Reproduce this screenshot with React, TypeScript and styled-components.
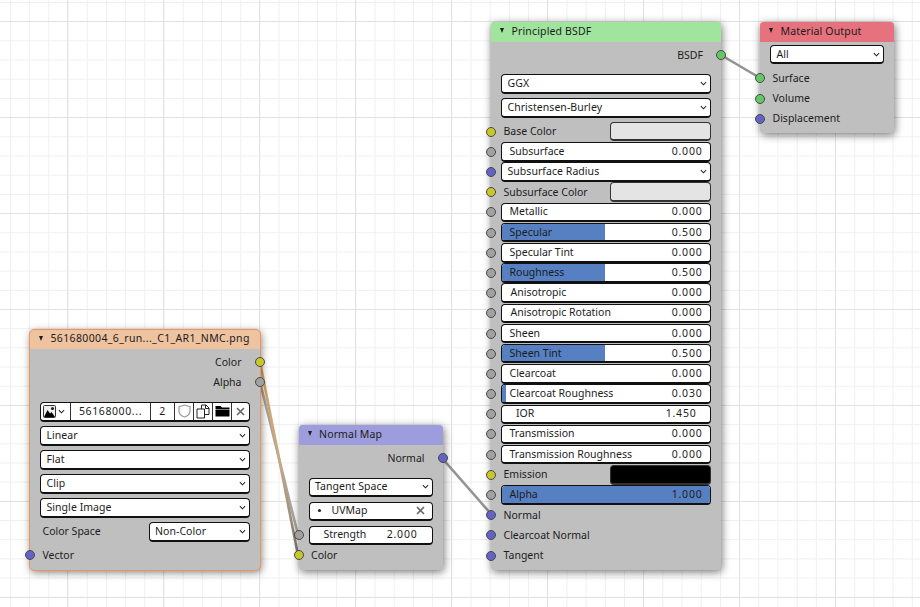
import React from "react";
import styled, { createGlobalStyle } from "styled-components";

const GlobalStyle = createGlobalStyle`
  html, body {
    margin: 0;
    padding: 0;
    background: #ffffff;
    overflow: hidden;
  }
`;

const SOCKET = {
  yellow: "#c7c729",
  gray: "#a1a1a1",
  blue: "#6363c7",
  green: "#63c763",
};

type SocketColor = keyof typeof SOCKET;

const Canvas = styled.div`
  position: relative;
  width: 920px;
  height: 607px;
  overflow: hidden;
  font-family: "Noto Sans", sans-serif;
  font-size: 10.5px;
  color: #1c1c1c;
  background-color: #ffffff;
  background-image: linear-gradient(to right, #e2e2e2 1px, transparent 1px),
    linear-gradient(to bottom, #e2e2e2 1px, transparent 1px),
    linear-gradient(to right, #efefef 1px, transparent 1px),
    linear-gradient(to bottom, #efefef 1px, transparent 1px);
  background-size: 96px 96px, 96px 96px, 19.2px 19.2px, 19.2px 19.2px;
  background-position: 67px 0, 0 21px, 10px 0, 0 2px;
`;

const Links = styled.svg`
  position: absolute;
  left: 0;
  top: 0;
`;

const Node = styled.div<{ $x: number; $y: number; $w: number; $h: number; $selected?: boolean }>`
  position: absolute;
  left: ${(p) => p.$x}px;
  top: ${(p) => p.$y}px;
  width: ${(p) => p.$w}px;
  height: ${(p) => p.$h}px;
  box-sizing: border-box;
  border-radius: 4px;
  background: #bfbfbf;
  box-shadow: 1px 2px 9px rgba(0, 0, 0, 0.55);
  outline: ${(p) => (p.$selected ? "1.5px solid #e8965f" : "none")};
`;

const Header = styled.div<{ $color: string; $track?: number }>`
  display: flex;
  align-items: center;
  gap: 7.5px;
  height: 19.5px;
  padding: 0 0 2px 9px;
  box-sizing: border-box;
  border-radius: 4px 4px 0 0;
  background: ${(p) => p.$color};
  white-space: nowrap;
  letter-spacing: ${(p) => p.$track ?? 0.15}px;
`;

const Caret = styled.span`
  width: 0;
  height: 0;
  flex: none;
  border-left: 2.8px solid transparent;
  border-right: 2.8px solid transparent;
  border-top: 5.5px solid #1e1e1e;
`;

const Row = styled.div<{ $h?: number; $gap?: number; $right?: boolean }>`
  position: relative;
  display: flex;
  align-items: center;
  justify-content: ${(p) => (p.$right ? "flex-end" : "flex-start")};
  height: ${(p) => p.$h ?? 20.19}px;
  margin-top: ${(p) => p.$gap ?? 0}px;
  padding: 0 10px;
  white-space: nowrap;
`;

const Socket = styled.span<{ $color: SocketColor; $right?: boolean }>`
  position: absolute;
  top: 50%;
  ${(p) => (p.$right ? "right: -5px;" : "left: -5px;")}
  width: 10px;
  height: 10px;
  margin-top: -5px;
  box-sizing: border-box;
  border-radius: 50%;
  border: 1px solid #4a4a4a;
  background: ${(p) => SOCKET[p.$color]};
`;

const Label = styled.span<{ $right?: boolean }>`
  padding: ${(p) => (p.$right ? "0 8px 1px 0" : "0 0 1px 2.5px")};
`;

const Field = styled.div`
  position: relative;
  display: flex;
  align-items: center;
  flex: 1;
  min-width: 0;
  height: 19.5px;
  box-sizing: border-box;
  border: 1px solid #111111;
  border-bottom-width: 2px;
  border-radius: 4px;
  background: #ffffff;
  overflow: hidden;
`;

const SelectText = styled.span`
  flex: 1;
  padding: 0 0 1px 5.5px;
  letter-spacing: 0.05px;
`;

const ChevronIcon = styled.svg`
  width: 7px;
  height: 5px;
  margin-right: 3px;
  flex: none;
`;

const Chevron = () => (
  <ChevronIcon viewBox="0 0 8 5">
    <path d="M1 1 L4 4 L7 1" fill="none" stroke="#222" strokeWidth="1.2" />
  </ChevronIcon>
);

const Fill = styled.span<{ $pct: number }>`
  position: absolute;
  left: 0;
  top: 0;
  bottom: 0;
  width: ${(p) => p.$pct}%;
  background: #5680c2;
`;

const FieldLabel = styled.span<{ $indent?: number }>`
  position: relative;
  flex: 1;
  padding: 0 0 1px ${(p) => p.$indent ?? 7.5}px;
`;

const FieldValue = styled.span<{ $pad?: number }>`
  position: relative;
  padding: 0 ${(p) => p.$pad ?? 7.5}px 1px 0;
  letter-spacing: 0.8px;
`;

const Swatch = styled.div<{ $color: string }>`
  width: 101px;
  height: 19.5px;
  margin-left: auto;
  box-sizing: border-box;
  border: 1px solid #333333;
  border-bottom-width: 2px;
  border-radius: 4px;
  background: ${(p) => p.$color};
`;

const SideSelect = styled(Field)`
  flex: none;
  width: 101px;
  margin-left: auto;
`;

const ImageBar = styled(Field)`
  display: grid;
  grid-template-columns: 30px 80px 24px 19px 19px 19px 1fr;
  align-items: stretch;
`;

const Cell = styled.div`
  display: flex;
  align-items: center;
  justify-content: center;
  gap: 2px;
  box-sizing: border-box;
  border-right: 1px solid #333333;
  letter-spacing: 0.6px;

  &:last-child {
    border-right: none;
  }
`;

const Dot = styled.span`
  width: 3px;
  height: 3px;
  margin: 0 11px 0 8px;
  border-radius: 50%;
  background: #222222;
`;

const ClearX = styled.svg`
  width: 9px;
  height: 9px;
  margin-right: 7px;
  flex: none;
`;

const Clear = () => (
  <ClearX viewBox="0 0 9 9">
    <path d="M1 1 L8 8 M8 1 L1 8" stroke="#666" strokeWidth="1.6" fill="none" />
  </ClearX>
);

const ImageIcon = () => (
  <svg width="13" height="13" viewBox="0 0 13 13">
    <rect x="0.5" y="0.5" width="12" height="12" rx="1" fill="#eee" stroke="#333" />
    <path d="M1 12 L4.5 5 L7 8.5 L8.5 7 L12 12 Z" fill="#000" />
    <circle cx="9.5" cy="3.5" r="1.5" fill="#222" />
  </svg>
);

const ShieldIcon = () => (
  <svg width="13" height="14" viewBox="0 0 13 14">
    <path
      d="M6.5 1 L12 2.6 V7 C12 10 9.5 12 6.5 13 C3.5 12 1 10 1 7 V2.6 Z"
      fill="none"
      stroke="#9a9a9a"
      strokeWidth="1.2"
    />
  </svg>
);

const CopyIcon = () => (
  <svg width="14" height="15" viewBox="0 0 14 15">
    <path d="M5.5 1 H10 L13 4 V10.5 H5.5 Z" fill="#fff" stroke="#222" />
    <path d="M9.5 1 V4.5 H13" fill="none" stroke="#222" />
    <path d="M1 5 H8.5 V14 H1 Z" fill="#fff" stroke="#222" />
  </svg>
);

const FolderIcon = () => (
  <svg width="15" height="12" viewBox="0 0 15 12">
    <path d="M0.5 1 H5.5 L7 2.5 H14.5 V4 H0.5 Z M0.5 4.5 H14.5 V11.5 H0.5 Z" fill="#000" />
  </svg>
);

type Slot = { label: string; value: string; pct?: number; indent?: number; pad?: number; socket?: SocketColor };

const Slider = ({ label, value, pct = 0, indent, pad }: Slot) => (
  <Field>
    <Fill $pct={pct} />
    <FieldLabel $indent={indent}>{label}</FieldLabel>
    <FieldValue $pad={pad}>{value}</FieldValue>
  </Field>
);

const Select = ({ children }: { children: React.ReactNode }) => (
  <Field>
    <SelectText>{children}</SelectText>
    <Chevron />
  </Field>
);

const SliderRow = (slot: Slot) => (
  <Row>
    <Socket $color={slot.socket ?? "gray"} />
    <Slider {...slot} />
  </Row>
);

const ColorRow = ({ label, color, socket }: { label: string; color: string; socket: SocketColor }) => (
  <Row>
    <Socket $color={socket} />
    <Label>{label}</Label>
    <Swatch $color={color} />
  </Row>
);

const InputRow = ({ label, socket, h, gap }: { label: string; socket: SocketColor; h?: number; gap?: number }) => (
  <Row $h={h} $gap={gap}>
    <Socket $color={socket} />
    <Label>{label}</Label>
  </Row>
);

const OutputRow = ({ label, socket, gap }: { label: string; socket: SocketColor; gap?: number }) => (
  <Row $right $gap={gap}>
    <Label $right>{label}</Label>
    <Socket $color={socket} $right />
  </Row>
);

const SelectRow = ({ children, gap }: { children: React.ReactNode; gap?: number }) => (
  <Row $h={24} $gap={gap}>
    <Select>{children}</Select>
  </Row>
);

const ImageNode = () => (
  <Node $x={30} $y={329.5} $w={229.5} $h={240} $selected>
    <Header $color="#efc2a0" $track={0.36}>
      <Caret />
      561680004_6_run..._C1_AR1_NMC.png
    </Header>
    <OutputRow label="Color" socket="yellow" gap={3} />
    <OutputRow label="Alpha" socket="gray" />
    <Row $h={24} $gap={7.5}>
      <ImageBar>
        <Cell>
          <ImageIcon />
          <Chevron />
        </Cell>
        <Cell>56168000...</Cell>
        <Cell>2</Cell>
        <Cell>
          <ShieldIcon />
        </Cell>
        <Cell>
          <CopyIcon />
        </Cell>
        <Cell>
          <FolderIcon />
        </Cell>
        <Cell>
          <svg width="9" height="9" viewBox="0 0 9 9">
            <path d="M1 1 L8 8 M8 1 L1 8" stroke="#666" strokeWidth="1.6" fill="none" />
          </svg>
        </Cell>
      </ImageBar>
    </Row>
    <SelectRow>Linear</SelectRow>
    <SelectRow>Flat</SelectRow>
    <SelectRow>Clip</SelectRow>
    <SelectRow>Single Image</SelectRow>
    <Row $h={24}>
      <Label>Color Space</Label>
      <SideSelect>
        <SelectText>Non-Color</SelectText>
        <Chevron />
      </SideSelect>
    </Row>
    <InputRow label="Vector" socket="blue" gap={1.5} />
  </Node>
);

const NormalMapNode = () => (
  <Node $x={298.5} $y={425} $w={144} $h={145}>
    <Header $color="#9d9cdc">
      <Caret />
      Normal Map
    </Header>
    <OutputRow label="Normal" socket="blue" gap={3.5} />
    <SelectRow gap={7.3}>Tangent Space</SelectRow>
    <Row $h={24}>
      <Field>
        <Dot />
        <FieldLabel $indent={0}>UVMap</FieldLabel>
        <Clear />
      </Field>
    </Row>
    <Row $h={24}>
      <Socket $color="gray" />
      <Slider label="Strength" value="2.000" indent={14} pad={14} />
    </Row>
    <InputRow label="Color" socket="yellow" h={16} />
  </Node>
);

const MaterialOutputNode = () => (
  <Node $x={760} $y={22} $w={134} $h={111}>
    <Header $color="#e6727e">
      <Caret />
      Material Output
    </Header>
    <Row $h={24} $gap={1}>
      <Select>All</Select>
    </Row>
    <InputRow label="Surface" socket="green" gap={1.5} />
    <InputRow label="Volume" socket="green" gap={0.3} />
    <InputRow label="Displacement" socket="blue" />
  </Node>
);

const PrincipledNode = () => (
  <Node $x={491} $y={22} $w={230} $h={548}>
    <Header $color="#a0e49e">
      <Caret />
      Principled BSDF
    </Header>
    <OutputRow label="BSDF" socket="green" gap={3.5} />
    <SelectRow gap={6.8}>GGX</SelectRow>
    <SelectRow>Christensen-Burley</SelectRow>
    <Row $gap={1.55}>
      <Socket $color="yellow" />
      <Label>Base Color</Label>
      <Swatch $color="#e4e4e4" />
    </Row>
    <SliderRow label="Subsurface" value="0.000" />
    <Row>
      <Socket $color="blue" />
      <Select>Subsurface Radius</Select>
    </Row>
    <ColorRow label="Subsurface Color" color="#e4e4e4" socket="yellow" />
    <SliderRow label="Metallic" value="0.000" />
    <SliderRow label="Specular" value="0.500" pct={49.3} />
    <SliderRow label="Specular Tint" value="0.000" />
    <SliderRow label="Roughness" value="0.500" pct={49.3} />
    <SliderRow label="Anisotropic" value="0.000" indent={8.5} />
    <SliderRow label="Anisotropic Rotation" value="0.000" indent={8.5} />
    <SliderRow label="Sheen" value="0.000" />
    <SliderRow label="Sheen Tint" value="0.500" pct={49.3} />
    <SliderRow label="Clearcoat" value="0.000" />
    <SliderRow label="Clearcoat Roughness" value="0.030" pct={1.8} />
    <SliderRow label="IOR" value="1.450" indent={14} pad={13.5} />
    <SliderRow label="Transmission" value="0.000" />
    <SliderRow label="Transmission Roughness" value="0.000" />
    <ColorRow label="Emission" color="#000000" socket="yellow" />
    <SliderRow label="Alpha" value="1.000" pct={100} />
    <InputRow label="Normal" socket="blue" />
    <InputRow label="Clearcoat Normal" socket="blue" />
    <InputRow label="Tangent" socket="blue" />
  </Node>
);

const App = () => (
  <>
    <GlobalStyle />
    <Canvas>
      <Links width="920" height="607" viewBox="0 0 920 607">
        <defs>
          <linearGradient id="colorLink" x1="0" y1="0" x2="0" y2="1">
            <stop offset="0" stopColor="#dca662" />
            <stop offset="0.55" stopColor="#c2a987" />
            <stop offset="1" stopColor="#7f7a70" />
          </linearGradient>
        </defs>
        <g fill="none" strokeWidth="2.6">
          <line x1="260" y1="382" x2="298" y2="535" stroke="#a8a49c" />
          <path d="M260 362 L298 555" stroke="url(#colorLink)" />
          <line x1="442" y1="458" x2="491" y2="514" stroke="#949494" />
          <line x1="721" y1="55" x2="760" y2="78" stroke="#949494" />
        </g>
      </Links>
      <ImageNode />
      <NormalMapNode />
      <PrincipledNode />
      <MaterialOutputNode />
    </Canvas>
  </>
);

export default App;
